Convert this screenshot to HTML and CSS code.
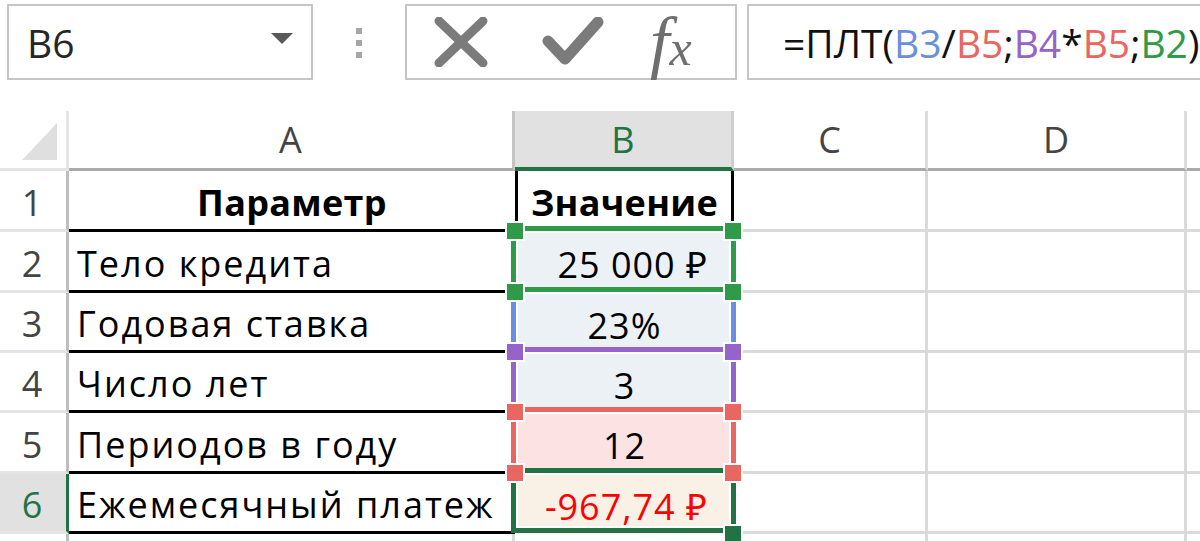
FILE: index.html
```html
<!DOCTYPE html>
<html>
<head>
    <meta charset="utf-8">
    <title>ПЛТ - Excel</title>
    <link rel="stylesheet" href="styles.css">
</head>
<body>
    <div class="fbar">
        <div class="namebox">
            <span>B6</span>
            <svg class="dd" width="22" height="12" viewBox="0 0 22 12"><path d="M0 1h22L11 12z" fill="#595959"/></svg>
        </div>
        <div class="grip"><i></i><i></i><i></i></div>
        <div class="fbtns">
            <svg class="ic" width="54" height="50" viewBox="0 0 54 50"><path d="M5 4L49 46M49 4L5 46" stroke="#7b7b7b" stroke-width="9" stroke-linecap="round"/></svg>
            <svg class="ic ok" width="62" height="50" viewBox="0 0 62 50"><path d="M6 24L23 42L56 5" fill="none" stroke="#7b7b7b" stroke-width="11" stroke-linejoin="round" stroke-linecap="round"/></svg>
            <span class="fx">f<small>x</small></span>
        </div>
        <div class="formula">=ПЛТ(<span class="r3">B3</span>/<span class="r5">B5</span>;<span class="r4">B4</span>*<span class="r5">B5</span>;<span class="r2">B2</span>)</div>
    </div>

    <div class="sheet">
        <div class="c corner"></div>
        <div class="c hd hd-a">A</div>
        <div class="c hd sel">B</div>
        <div class="c hd">C</div>
        <div class="c hd">D</div>
        <div class="c hd"></div>

        <div class="c rh">1</div>
        <div class="c a th">Параметр</div>
        <div class="c b1 th">Значение</div>
        <div class="c"></div><div class="c"></div><div class="c"></div>

        <div class="c rh">2</div>
        <div class="c a">Тело кредита</div>
        <div class="c ref g2 num">25 000 ₽<i class="h l"></i><i class="h r"></i></div>
        <div class="c"></div><div class="c"></div><div class="c"></div>

        <div class="c rh">3</div>
        <div class="c a">Годовая ставка</div>
        <div class="c ref g3">23%<i class="h l"></i><i class="h r"></i></div>
        <div class="c"></div><div class="c"></div><div class="c"></div>

        <div class="c rh">4</div>
        <div class="c a">Число лет</div>
        <div class="c ref g4">3<i class="h l"></i><i class="h r"></i></div>
        <div class="c"></div><div class="c"></div><div class="c"></div>

        <div class="c rh">5</div>
        <div class="c a">Периодов в году</div>
        <div class="c ref g5">12<i class="h l"></i><i class="h r"></i></div>
        <div class="c"></div><div class="c"></div><div class="c"></div>

        <div class="c rh on">6</div>
        <div class="c a">Ежемесячный платеж</div>
        <div class="c ref g6 num neg">-967,74 ₽<i class="h l"></i><i class="h r"></i><i class="h fill"></i></div>
        <div class="c"></div><div class="c"></div><div class="c"></div>

        <div class="c rh"></div>
        <div class="c a7"></div>
        <div class="c"></div>
        <div class="c"></div><div class="c"></div><div class="c"></div>
    </div>
</body>
</html>
```

FILE: styles.css
```css
body { margin: 0; background: #fff; color: #000; font-family: "Open Sans", "Noto Sans", sans-serif; overflow: hidden; }

/* formula bar */
.fbar { display: flex; align-items: flex-start; height: 111px; padding: 4px 0 0 7px; box-sizing: border-box; }
.namebox { width: 306px; height: 76px; box-sizing: border-box; border: 2px solid #c6c6c6; display: flex; align-items: center; justify-content: space-between; padding: 0 18px 0 18px; font-size: 39px; color: #262626; }
.namebox .dd { margin-top: -8px; }
.grip { width: 92px; display: flex; flex-direction: column; align-items: center; gap: 6px; padding-top: 24px; }
.grip i { width: 6px; height: 6px; background: #a6a6a6; }
.fbtns { width: 332px; height: 76px; box-sizing: border-box; border: 2px solid #c6c6c6; display: flex; align-items: center; padding-left: 27px; }
.fbtns .ok { margin-left: 54px; }
.fx { margin-left: 46px; font-family: "Liberation Serif", "DejaVu Serif", serif; font-style: italic; font-size: 70px; color: #6f6f6f; line-height: 1; }
.fx small { font-size: 50px; }
.formula { flex: 1; height: 76px; margin-left: 10px; margin-right: -20px; box-sizing: border-box; border: 2px solid #c6c6c6; display: flex; align-items: center; padding-left: 34px; font-size: 39px; color: #111; white-space: nowrap; }
.r2 { color: #2f9a47; }
.r3 { color: #6a8fe0; }
.r4 { color: #9563c9; }
.r5 { color: #ea6660; }

/* sheet */
.sheet { display: grid; grid-template-columns: 69px 446px 219px 194px 259px 1fr; grid-template-rows: 60px 61px 61px 60px 60px 61px 60px 40px; }
.c { box-sizing: border-box; border-right: 3px solid #dadada; border-bottom: 3px solid #dadada; display: flex; align-items: center; padding: 4px 8px 0; font-size: 36px; white-space: nowrap; min-width: 0; }

.hd { justify-content: center; color: #444; font-size: 36px; border-bottom-color: #ababab; border-right-color: #dcdcdc; padding-top: 0; }
.hd-a { border-right-color: #c4c4c4; }
.hd.sel { background: #e1e1e1; color: #217346; border-bottom: 4px solid #217346; border-right-color: #cfcfcf; }
.corner { justify-content: flex-end; align-items: flex-end; padding: 0 9px 8px 0; border-color: #e4e4e4; }
.corner::after { content: ""; width: 35px; height: 37px; background: #dfdfdf; clip-path: polygon(100% 0, 100% 100%, 0 100%); }

.rh { justify-content: center; padding-right: 10px; color: #444; border-right-color: #bdbdbd; border-bottom-color: #e4e4e4; }
.rh.on { background: #e1e1e1; color: #217346; border-right-color: #217346; }

.a { border-right: none; border-bottom-color: #000; letter-spacing: 2px; }
.th { font-weight: 700; justify-content: center; letter-spacing: 0.3px; }
.b1 { border-left: 3px solid #000; border-right-color: #000; border-bottom-color: transparent; }
.a7 { border-right-color: #dadada; }

/* reference frames in column B */
.ref { position: relative; justify-content: center; border-right: none; border-bottom: none; letter-spacing: 1px; --c: #2f9a47; --t: #2f9a47; --hc: #2f9a47; background: #ebf1f5; }
.ref::before { content: ""; position: absolute; left: -4px; right: -2px; top: -6px; bottom: 0; border: 5px solid var(--c); border-top-color: var(--t); border-bottom: none; box-shadow: inset 0 0 0 2px #fff; }
.ref.num { justify-content: flex-end; padding-right: 26px; }
.g3 { --c: #6a8fe0; --t: #2f9a47; --hc: #2f9a47; }
.g4 { --c: #9563c9; --t: #9563c9; --hc: #9563c9; }
.g5 { --c: #ea6660; --t: #ea6660; --hc: #ea6660; background: #fde2e4; }
.g6 { --c: #217346; --t: #217346; --hc: #ea6660; background: #f9f0e6; }
.g6::before { bottom: 1px; border-bottom: 5px solid #217346; }
.neg { color: #f00; }

.h { position: absolute; top: -9px; width: 16px; height: 16px; background: var(--hc); box-shadow: 0 0 0 2px #fff; }
.h.l { left: -8px; }
.h.r { right: -7px; }
.h.fill { top: auto; right: -7px; bottom: -8px; background: #217346; }
```
